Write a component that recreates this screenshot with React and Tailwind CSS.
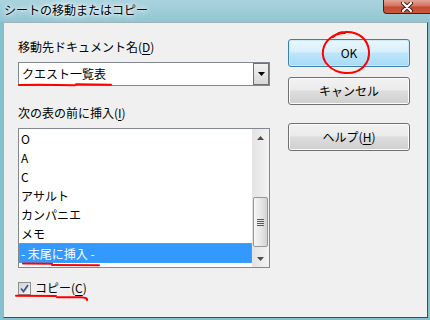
import React from "react";

const FONT = {
  fontFamily: '"Noto Sans CJK JP", "Noto Sans", sans-serif',
};

function Btn({ children, primary }) {
  return (
    <div
      className={
        "h-[28px] w-full flex items-center justify-center rounded-[3px] border text-[12px] leading-[16px] text-black " +
        (primary
          ? "border-[#3c7fb1] bg-[linear-gradient(#eaf6fd_0%,#d9f0fc_45%,#bee6fd_50%,#a7d9f5_100%)] shadow-[inset_0_0_0_1px_#cdeaf9]"
          : "border-[#707070] bg-[linear-gradient(#f2f2f2_0%,#ebebeb_45%,#dddddd_50%,#cfcfcf_100%)] shadow-[inset_0_0_0_1px_#fcfcfc]")
      }
    >
      {children}
    </div>
  );
}

function Tri({ up }) {
  return (
    <svg width="7" height="4" viewBox="0 0 7 4">
      <path d={up ? "M0 4 L3.5 0 L7 4 Z" : "M0 0 L7 0 L3.5 4 Z"} fill="#4d4d4d" />
    </svg>
  );
}

export default function App() {
  const items = ["O", "A", "C", "アサルト", "カンパニエ", "メモ"];

  return (
    <div
      className="relative w-[430px] h-[320px] overflow-hidden bg-[#85c0ce] flex flex-col"
      style={FONT}
    >
      {/* title bar */}
      <div className="h-[22px] flex justify-between bg-[linear-gradient(#a9d3de,#92c6d3)]">
        <div className="pl-[4px] pt-[1px] text-[12px] leading-[18px] text-black [text-shadow:0_0_6px_#ffffff,0_0_10px_#ffffff,0_0_3px_#ffffff]">
          シートの移動またはコピー
        </div>
        <div className="w-[47px] h-[14px] rounded-bl-[4px] border-l border-b border-[#4a1e18] bg-[linear-gradient(#e3a596_0%,#d3735f_45%,#c44a32_55%,#c95b3e_100%)] flex items-center justify-center">
          <svg width="12" height="10" viewBox="0 0 12 10">
            <path d="M2 1 L10 9 M10 1 L2 9" stroke="#3a1a14" strokeWidth="4" strokeLinecap="round" />
            <path d="M2 1 L10 9 M10 1 L2 9" stroke="#ffffff" strokeWidth="2.2" strokeLinecap="round" />
          </svg>
        </div>
      </div>

      {/* client area */}
      <div className="ml-[3px] mr-[2px] mb-[2px] flex-1 flex border border-l-[#9fb3b9] border-t-[#9fb3b9] border-r-[#3d4c51] border-b-[#3d4c51] bg-[#f0f0f0] text-[12px] text-black">
        {/* left column */}
        <div className="ml-[14px] w-[252px] pt-[16px] flex flex-col">
          <div className="h-[16px] leading-[16px]">
            移動先ドキュメント名(<span className="underline underline-offset-2">D</span>)
          </div>
          <div className="mt-[7px] h-[24px] flex border border-[#828790] bg-white">
            <div className="flex-1 pl-[3px] leading-[22px]">クエスト一覧表</div>
            <div className="w-[16px] my-[0px] mr-[0px] border border-[#707070] bg-[linear-gradient(#f2f2f2,#d8d8d8)] flex items-center justify-center">
              <svg width="7" height="4" viewBox="0 0 7 4">
                <path d="M0 0 L7 0 L3.5 4 Z" fill="#000000" />
              </svg>
            </div>
          </div>

          <div className="mt-[19px] h-[16px] leading-[16px]">
            次の表の前に挿入(<span className="underline underline-offset-2">I</span>)
          </div>
          <div className="mt-[7px] h-[140px] flex border border-[#828790] bg-white">
            <div className="flex-1 flex flex-col">
              {items.map((t) => (
                <div key={t} className="h-[19px] leading-[19px] pl-[2px]">
                  {t}
                </div>
              ))}
              <div className="h-[20px] leading-[19px] pl-[1px] bg-[#3399ff] text-white border border-dotted border-[#e0802a]">
                - 末尾に挿入 -
              </div>
            </div>
            {/* scrollbar */}
            <div className="w-[17px] flex flex-col bg-[linear-gradient(90deg,#e3e3e3,#f3f3f3)]">
              <div className="h-[17px] flex items-center justify-center">
                <Tri up />
              </div>
              <div className="flex-1 px-[1px]">
                <div className="mt-[51px] h-[50px] rounded-[2px] border border-[#979797] bg-[linear-gradient(90deg,#f6f6f6,#e4e4e4_60%,#d2d2d2)] flex flex-col items-center justify-center gap-[1px]">
                  <div className="w-[7px] h-[1px] bg-[#5a5a5a]" />
                  <div className="w-[7px] h-[1px] bg-[#5a5a5a]" />
                  <div className="w-[7px] h-[1px] bg-[#5a5a5a]" />
                  <div className="w-[7px] h-[1px] bg-[#5a5a5a]" />
                </div>
              </div>
              <div className="h-[17px] flex items-center justify-center">
                <Tri />
              </div>
            </div>
          </div>

          <div className="mt-[12px] h-[16px] flex items-center gap-[4px]">
            <div className="w-[13px] h-[13px] border border-[#8e8f8f] bg-[linear-gradient(135deg,#cfd3d8,#f6f6f6)] flex items-center justify-center">
              <svg width="9" height="9" viewBox="0 0 9 9">
                <path d="M1 4.5 L3.5 7.5 L8 1" stroke="#3e5797" strokeWidth="1.8" fill="none" />
              </svg>
            </div>
            <div className="leading-[16px]">
              コピー(<span className="underline underline-offset-2">C</span>)
            </div>
          </div>
        </div>

        {/* right column */}
        <div className="ml-[18px] w-[122px] pt-[16px] flex flex-col">
          <Btn primary>OK</Btn>
          <div className="mt-[10px]">
            <Btn>キャンセル</Btn>
          </div>
          <div className="mt-[18px]">
            <Btn>
              <span>
                ヘルプ(<span className="underline underline-offset-2">H</span>)
              </span>
            </Btn>
          </div>
        </div>
      </div>

      {/* red hand annotations */}
      <svg
        className="absolute left-0 top-0 pointer-events-none"
        width="430"
        height="320"
        viewBox="0 0 430 320"
      >
        <g stroke="#ff0000" strokeWidth="2" fill="none" strokeLinecap="round">
          <path d="M19 85 Q45 84.5 75 85.3" />
          <path d="M76 84.3 L111 84.8" />
          <path d="M23 263.5 L52 263.8" />
          <path d="M52 265 L99 265.3" />
          <path d="M16 295.8 L56 296" />
          <path d="M57 297.3 L81 297.3 Q88 297.8 87 300" />
          <path d="M345 33 C334 33 325 40 323 50 C321 62 332 72 345 73 C360 74 370 64 369 51 C368 39 358 31 345 32 C340 32 336 34 333 37" />
        </g>
      </svg>
    </div>
  );
}
